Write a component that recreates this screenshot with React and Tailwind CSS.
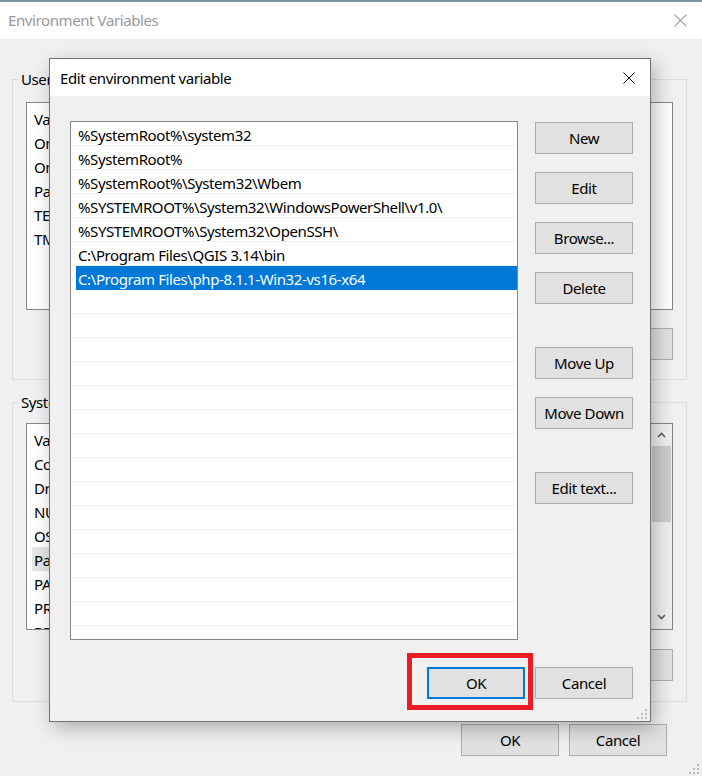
import React from 'react';

const userVars = ['OneDrive', 'OneDriveConsumer', 'Path', 'TEMP', 'TMP'];
const systemVars = [
  'ComSpec',
  'DriverData',
  'NUMBER_OF_PROCESSORS',
  'OS',
  'Path',
  'PATHEXT',
  'PROCESSOR_ARCHITECTURE',
  'PROCESSOR_IDENTIFIER',
];

const pathEntries = [
  '%SystemRoot%\\system32',
  '%SystemRoot%',
  '%SystemRoot%\\System32\\Wbem',
  '%SYSTEMROOT%\\System32\\WindowsPowerShell\\v1.0\\',
  '%SYSTEMROOT%\\System32\\OpenSSH\\',
  'C:\\Program Files\\QGIS 3.14\\bin',
  'C:\\Program Files\\php-8.1.1-Win32-vs16-x64',
];

function WinButton({ children, className = '', focused = false }) {
  return (
    <button
      className={
        'h-[32px] w-[98px] bg-[#e1e1e1] text-[15px] text-black leading-none pt-[1px] ' +
        (focused ? 'border-2 border-[#0078d7] ' : 'border border-[#adadad] ') +
        className
      }
    >
      {children}
    </button>
  );
}

function CloseIcon({ color, size }) {
  return (
    <svg width={size} height={size} viewBox="0 0 12 12" fill="none">
      <path d="M0.5 0.5 L11.5 11.5 M11.5 0.5 L0.5 11.5" stroke={color} strokeWidth="1" />
    </svg>
  );
}

function Grip() {
  return (
    <svg width="12" height="12" viewBox="0 0 12 12">
      <g fill="#bcbcbc">
        <rect x="9" y="1" width="2" height="2" />
        <rect x="5" y="5" width="2" height="2" />
        <rect x="9" y="5" width="2" height="2" />
        <rect x="1" y="9" width="2" height="2" />
        <rect x="5" y="9" width="2" height="2" />
        <rect x="9" y="9" width="2" height="2" />
      </g>
    </svg>
  );
}

function VarList({ names, highlight, height, scrollbar }) {
  return (
    <div className={'flex border border-[#828790] bg-white overflow-hidden ' + height}>
      <div className="flex-1 pt-[3px]">
        <div className="h-[24px] flex items-center pt-[3px] pl-[7px] text-[15px]">Variable</div>
        {names.map((n) => (
          <div
            key={n}
            className={
              'h-[24px] flex items-center pt-[3px] ml-[5px] pl-[2px] text-[15px] whitespace-nowrap ' +
              (n === highlight ? 'bg-[#e5e5e5]' : '')
            }
          >
            {n}
          </div>
        ))}
      </div>
      {scrollbar && (
        <div className="w-[21px] bg-[#f0f0f0] flex flex-col items-center">
          <div className="h-[22px] flex items-center justify-center">
            <svg width="9" height="6" viewBox="0 0 9 6" fill="none">
              <path d="M1 5 L4.5 1.5 L8 5" stroke="#606060" strokeWidth="1.6" />
            </svg>
          </div>
          <div className="w-[19px] h-[76px] bg-[#cdcdcd]" />
          <div className="flex-1" />
          <div className="h-[24px] flex items-center justify-center">
            <svg width="9" height="6" viewBox="0 0 9 6" fill="none">
              <path d="M1 1 L4.5 4.5 L8 1" stroke="#606060" strokeWidth="1.6" />
            </svg>
          </div>
        </div>
      )}
    </div>
  );
}

function EditDialog() {
  const rows = [...pathEntries, ...Array(15).fill('')];
  const selected = pathEntries.length - 1;

  return (
    <div className="absolute left-[49px] top-[58px] w-[602px] h-[664px] border border-[#737373] bg-[#f0f0f0] shadow-[4px_6px_18px_rgba(0,0,0,0.28)] flex flex-col">
      <div className="h-[37px] bg-white flex items-center justify-between pl-[10px] pr-[15px]">
        <span className="text-[15px] text-black pt-[1px]">Edit environment variable</span>
        <CloseIcon color="#000" size={12} />
      </div>

      <div className="flex-1 pl-[20px] pr-[17px] pt-[25px] flex flex-col">
        <div className="flex gap-[17px]">
          <div className="w-[448px] h-[519px] border border-[#828790] bg-white overflow-hidden pl-[1px]">
            {rows.map((text, i) => (
              <div
                key={i}
                className={
                  'h-[24px] ' + (i === selected ? 'pl-[4px]' : 'border-b border-[#f0f0f0]')
                }
              >
                <div
                  className={
                    'h-full flex items-center pt-[3px] text-[15px] whitespace-nowrap ' +
                    (i === selected ? 'bg-[#0078d7] text-white pl-[2px]' : 'text-black pl-[6px]')
                  }
                >
                  {text}
                </div>
              </div>
            ))}
          </div>

          <div className="flex flex-col w-[98px] pt-[1px]">
            <WinButton>New</WinButton>
            <WinButton className="mt-[18px]">Edit</WinButton>
            <WinButton className="mt-[18px]">Browse...</WinButton>
            <WinButton className="mt-[18px]">Delete</WinButton>
            <WinButton className="mt-[43px]">Move Up</WinButton>
            <WinButton className="mt-[18px]">Move Down</WinButton>
            <WinButton className="mt-[43px]">Edit text...</WinButton>
          </div>
        </div>

        <div className="flex justify-end gap-[10px] mt-[27px]">
          <WinButton focused>OK</WinButton>
          <WinButton>Cancel</WinButton>
        </div>
      </div>

      <div className="absolute right-[2px] bottom-[1px]">
        <Grip />
      </div>
    </div>
  );
}

export default function App() {
  return (
    <div className="relative w-[702px] h-[776px] overflow-hidden bg-[#f0f0f0] text-black tracking-[-0.4px] font-['Noto_Sans',sans-serif]">
      {/* Environment Variables window (behind) */}
      <div className="border-t-2 border-[#7b95a3] h-[39px] bg-white flex items-center justify-between pl-[8px] pr-[15px]">
        <span className="text-[15px] text-[#999999]">Environment Variables</span>
        <CloseIcon color="#9a9a9a" size={13} />
      </div>

      <div className="pl-[12px] pr-[15px]">
        <fieldset className="mt-[30px] border border-[#dcdcdc] px-[13px] pb-[19px]">
          <legend className="-ml-[7px] px-[2px] text-[15px] leading-[20px]">User variables for user</legend>
          <div className="mt-[13px]">
            <VarList names={userVars} height="h-[208px]" />
          </div>
          <div className="flex justify-end gap-[10px] mt-[18px]">
            <WinButton>New...</WinButton>
            <WinButton>Edit...</WinButton>
            <WinButton>Delete</WinButton>
          </div>
        </fieldset>

        <fieldset className="mt-[12px] border border-[#dcdcdc] px-[13px] pb-[20px]">
          <legend className="-ml-[7px] px-[2px] text-[15px] leading-[20px]">System variables</legend>
          <div className="mt-[11px]">
            <VarList names={systemVars} highlight="Path" height="h-[207px]" scrollbar />
          </div>
          <div className="flex justify-end gap-[10px] mt-[19px]">
            <WinButton>New...</WinButton>
            <WinButton>Edit...</WinButton>
            <WinButton>Delete</WinButton>
          </div>
        </fieldset>

        <div className="flex justify-end gap-[10px] mt-[22px] pr-[20px]">
          <WinButton>OK</WinButton>
          <WinButton>Cancel</WinButton>
        </div>
      </div>

      <div className="absolute right-[2px] bottom-[1px]">
        <Grip />
      </div>

      <EditDialog />

      {/* red annotation around OK */}
      <div className="absolute left-[407px] top-[653px] w-[126px] h-[57px] border-[5px] border-[#ed1c24]" />
    </div>
  );
}
